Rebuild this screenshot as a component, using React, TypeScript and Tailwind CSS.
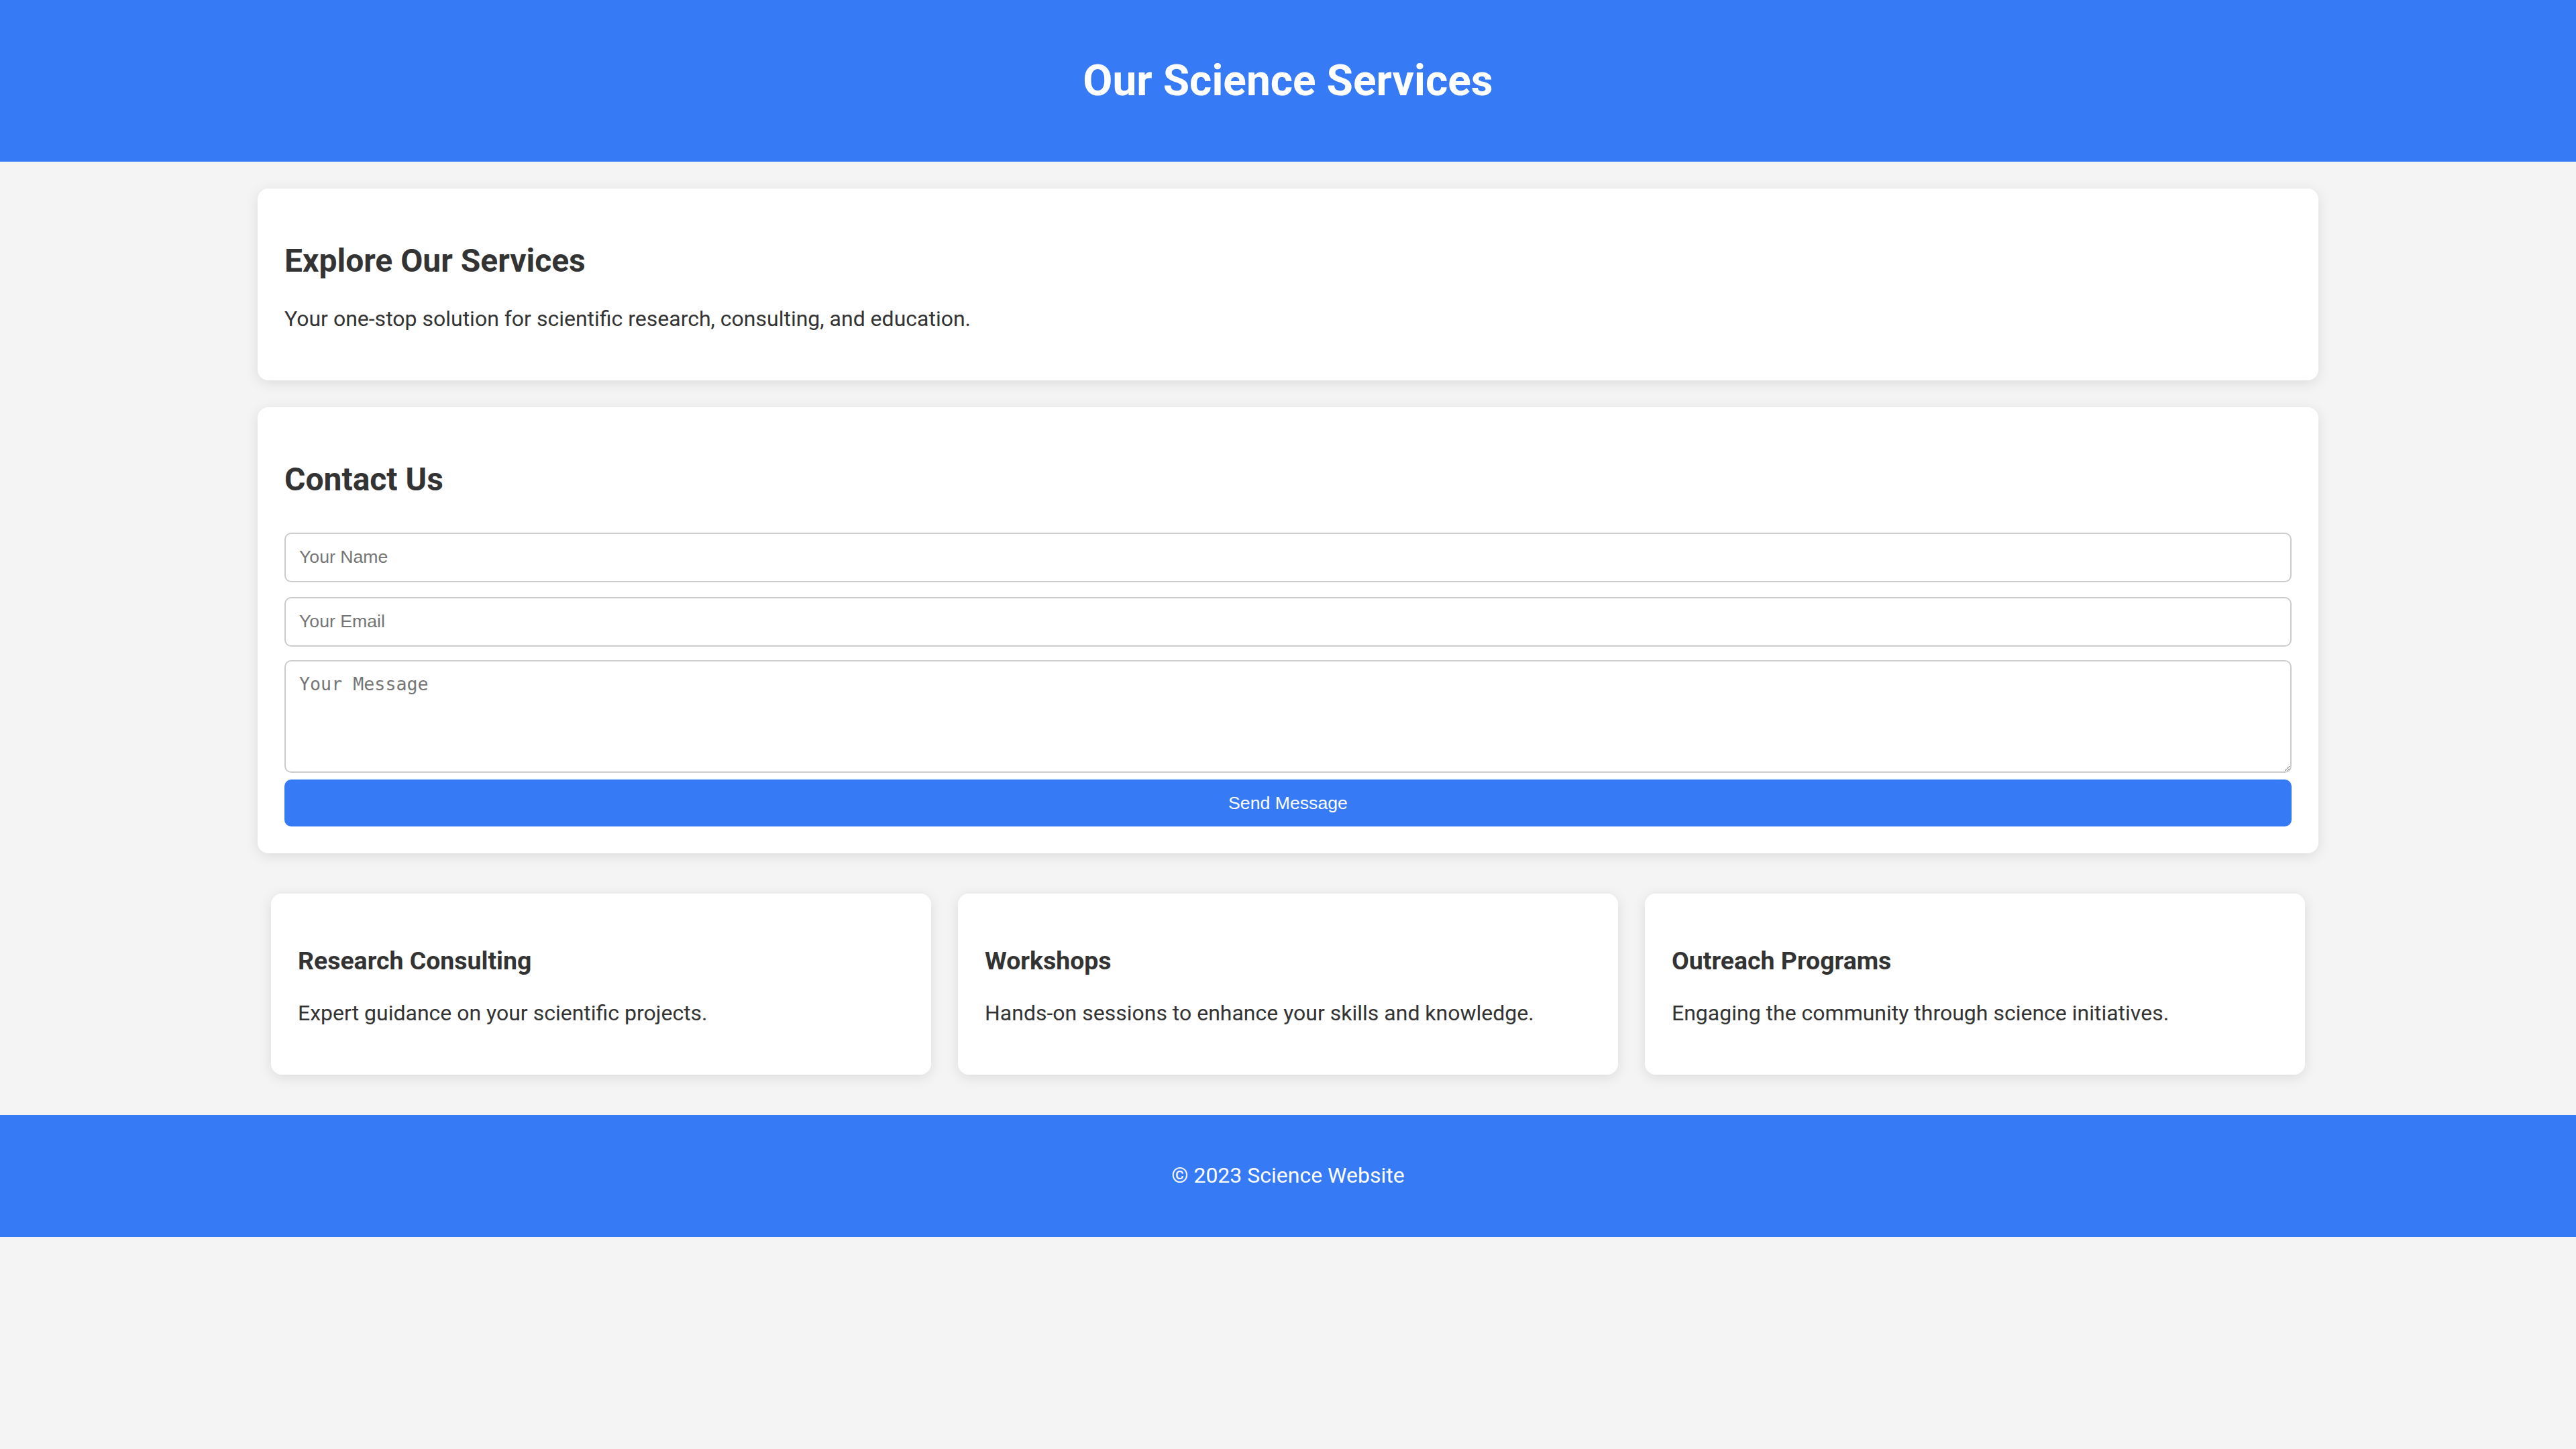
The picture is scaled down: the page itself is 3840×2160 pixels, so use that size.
import React from "react";

const services = [
  { title: "Research Consulting", desc: "Expert guidance on your scientific projects." },
  { title: "Workshops", desc: "Hands-on sessions to enhance your skills and knowledge." },
  { title: "Outreach Programs", desc: "Engaging the community through science initiatives." },
];

export default function App() {
  return (
    <div className="min-h-screen bg-[#f4f4f4] text-[#333] font-['Roboto',sans-serif]">
      <header className="h-[241px] bg-[#367bf5] flex items-center justify-center">
        <h1 className="text-[64px] leading-[75px] font-bold text-white">Our Science Services</h1>
      </header>

      <section className="w-[80%] mx-auto mt-[40px] bg-white rounded-[16px] p-[40px] shadow-[0_4px_20px_rgba(0,0,0,0.1)]">
        <h2 className="text-[48px] leading-[56px] font-bold mt-[40px] mb-[40px]">Explore Our Services</h2>
        <p className="text-[32px] leading-[37.5px] mb-[32px]">
          Your one-stop solution for scientific research, consulting, and education.
        </p>
      </section>

      <section className="w-[80%] mx-auto mt-[40px] bg-white rounded-[16px] p-[40px] shadow-[0_4px_20px_rgba(0,0,0,0.1)]">
        <h2 className="text-[48px] leading-[56px] font-bold mt-[40px] mb-[40px]">Contact Us</h2>
        <div className="flex flex-col">
          <input
            type="text"
            placeholder="Your Name"
            className="mt-[11px] h-[74px] w-full border-2 border-[#ccc] rounded-[10px] px-[20px] text-[26.67px] font-['Liberation_Sans',Arial,sans-serif] placeholder:text-[#757575] outline-none bg-white"
          />
          <input
            type="email"
            placeholder="Your Email"
            className="mt-[22px] h-[74px] w-full border-2 border-[#ccc] rounded-[10px] px-[20px] text-[26.67px] font-['Liberation_Sans',Arial,sans-serif] placeholder:text-[#757575] outline-none bg-white"
          />
          <textarea
            placeholder="Your Message"
            className="mt-[20px] h-[168px] w-full border-2 border-[#ccc] rounded-[10px] px-[20px] py-[18px] text-[26.67px] leading-[31px] font-['DejaVu_Sans_Mono',monospace] placeholder:text-[#757575] outline-none bg-white resize-y"
          />
          <button className="mt-[10px] h-[70px] w-full bg-[#367bf5] text-white rounded-[10px] text-[26.67px] font-['Liberation_Sans',Arial,sans-serif]">
            Send Message
          </button>
        </div>
      </section>

      <section className="w-[80%] mx-auto mt-[40px] mb-[40px] grid grid-cols-3 gap-[40px] p-[20px]">
        {services.map((s) => (
          <div
            key={s.title}
            className="bg-white rounded-[16px] p-[40px] shadow-[0_4px_20px_rgba(0,0,0,0.1)]"
          >
            <h3 className="text-[37.44px] leading-[46px] font-bold mt-[37.44px] mb-[37.44px]">{s.title}</h3>
            <p className="text-[32px] leading-[37.5px] mb-[32px]">{s.desc}</p>
          </div>
        ))}
      </section>

      <footer className="h-[182px] bg-[#367bf5] flex items-center justify-center">
        <p className="text-[32px] leading-[37.5px] text-white">© 2023 Science Website</p>
      </footer>
    </div>
  );
}
